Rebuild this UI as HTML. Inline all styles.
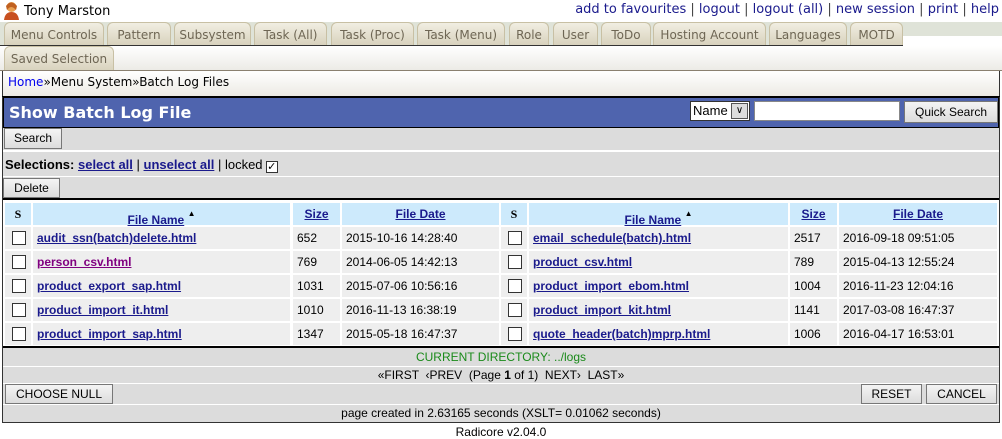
<!DOCTYPE html>
<html><head><style>
*{margin:0;padding:0;box-sizing:border-box}
body{width:1002px;height:438px;background:#fff;position:relative;font-family:"Liberation Sans",sans-serif;font-size:13px;overflow:hidden}
.a{position:absolute}
.v{font-family:"DejaVu Sans",sans-serif}
.tab{position:absolute;top:22px;height:23px;background:linear-gradient(#f1eee2,#d8d2bd);border:1px solid #c8c0a4;border-bottom:none;border-radius:6px 6px 0 0;color:#6e6654;font-family:"DejaVu Sans",sans-serif;font-size:12px;line-height:25px;text-align:center}
a{color:#1a1a8c}
.lk{color:#1a1a8c;text-decoration:underline;font-weight:bold;font-size:12px}
.btn{position:absolute;background:linear-gradient(#f4f4f4,#dcdcdc);border:1px solid #777;font-size:12px;text-align:center;color:#000}
.cell{position:absolute;background:#eeeeee;font-size:12px;line-height:22px;padding-left:4px}
.hd{position:absolute;background:#cdeafc;font-size:12px;font-weight:bold;text-align:center;line-height:22px;height:22px}
.cb{position:absolute;width:14px;height:14px;border:1px solid #333;background:#fff}
</style></head><body>
<svg class="a" style="left:3px;top:1px" width="17" height="19" viewBox="0 0 17 19"><circle cx="8.5" cy="6" r="5" fill="#e8a050"/><path d="M3 5 Q8 -2 14 5 L13 9 Q8 3 4 9Z" fill="#c06020"/><path d="M1 19 Q2 11 8.5 11 Q15 11 16 19Z" fill="#c85020"/></svg>
<div class="a v" style="left:24px;top:4px;font-size:13px">Tony Marston</div>
<div class="a v" style="right:3px;top:2px;font-size:13px;color:#444"><a>add to favourites</a> | <a>logout</a> | <a>logout (all)</a> | <a>new session</a> | <a>print</a> | <a>help</a></div>
<div class="a" style="left:0;top:22px;width:1002px;height:23px;background:#dfe3d8"></div>
<div class="a" style="left:903px;top:36px;width:99px;height:9px;background:#fff"></div>
<div class="tab" style="left:4px;width:100px">Menu Controls</div>
<div class="tab" style="left:107px;width:64px">Pattern</div>
<div class="tab" style="left:174px;width:77px">Subsystem</div>
<div class="tab" style="left:254px;width:73px">Task (All)</div>
<div class="tab" style="left:331px;width:83px">Task (Proc)</div>
<div class="tab" style="left:417px;width:88px">Task (Menu)</div>
<div class="tab" style="left:509px;width:40px">Role</div>
<div class="tab" style="left:553px;width:45px">User</div>
<div class="tab" style="left:601px;width:50px">ToDo</div>
<div class="tab" style="left:653px;width:113px">Hosting Account</div>
<div class="tab" style="left:769px;width:78px">Languages</div>
<div class="tab" style="left:850px;width:53px">MOTD</div>
<div class="a" style="left:0;top:45px;width:903px;height:1px;background:#333"></div>
<div class="a" style="left:0;top:46px;width:1002px;height:24px;background:linear-gradient(#fff,#ecebe6)"></div>
<div class="tab" style="top:46px;left:4px;width:110px;height:25px">Saved Selection</div>
<div class="a" style="left:0;top:70px;width:1002px;height:1px;background:#8a8070"></div>
<div class="a" style="left:2px;top:71px;width:998px;height:352px;border:1px solid #333;border-top:none;background:#dcdcdc"></div>
<div class="a" style="left:3px;top:71px;width:996px;height:25px;background:linear-gradient(#fff,#eceae4)"></div>
<div class="a v" style="left:8px;top:75px;font-size:12px"><span style="color:#0000ee">Home</span>»Menu System»Batch Log Files</div>
<div class="a" style="left:2px;top:96px;width:998px;height:1px;background:#000"></div>
<div class="a" style="left:3px;top:97px;width:996px;height:31px;background:#4f64ae;border:1px solid #000"></div>
<div class="a v" style="left:9px;top:103px;font-size:16px;font-weight:bold;color:#fff">Show Batch Log File</div>
<div class="a" style="left:690px;top:101px;width:60px;height:20px;background:#fff;border:1px solid #333;font-size:13px;line-height:18px;padding-left:2px">Name<span class="a" style="right:1px;top:1px;width:17px;height:16px;background:#ddd;border:1px solid #555;font-size:10px;text-align:center;line-height:14px">&#x2228;</span></div>
<div class="a" style="left:754px;top:101px;width:146px;height:20px;background:#fff;border:1px solid #888"></div>
<div class="btn" style="left:904px;top:101px;width:94px;height:22px;line-height:20px">Quick Search</div>
<div class="btn" style="left:4px;top:128px;width:58px;height:21px;line-height:19px">Search</div>
<div class="a" style="left:3px;top:150px;width:996px;height:2px;background:#fff"></div>
<div class="a" style="left:5px;top:157px;font-size:13px"><b>Selections:</b> <a class="lk" style="font-size:13px">select all</a> | <a class="lk" style="font-size:13px">unselect all</a> | locked <span style="display:inline-block;width:12px;height:12px;border:1px solid #333;background:#fff;font-size:11px;line-height:10px;vertical-align:-1px">✓</span></div>
<div class="a" style="left:3px;top:176px;width:996px;height:1px;background:#fff"></div>
<div class="btn" style="left:3px;top:178px;width:57px;height:20px;line-height:18px">Delete</div>
<div class="a" style="left:3px;top:198px;width:996px;height:150px;background:#fff;border-top:2px solid #000;border-bottom:2px solid #000"></div>
<div class="hd" style="left:5px;top:203px;width:26px;font-family:'Liberation Serif',serif">S</div>
<div class="hd" style="left:33px;top:203px;width:257px"><span class="lk" style="position:relative;top:2px">File Name</span> <span style="font-size:8px;vertical-align:6px">▲</span></div>
<div class="hd" style="left:293px;top:203px;width:47px"><span class="lk">Size</span></div>
<div class="hd" style="left:342px;top:203px;width:157px"><span class="lk">File Date</span></div>
<div class="hd" style="left:501px;top:203px;width:26px;font-family:'Liberation Serif',serif">S</div>
<div class="hd" style="left:529px;top:203px;width:259px"><span class="lk" style="position:relative;top:2px">File Name</span> <span style="font-size:8px;vertical-align:6px">▲</span></div>
<div class="hd" style="left:790px;top:203px;width:47px"><span class="lk">Size</span></div>
<div class="hd" style="left:839px;top:203px;width:158px"><span class="lk">File Date</span></div>

<div id="rows"></div>
<script>
var d=[["audit_ssn(batch)delete.html","652","2015-10-16 14:28:40","email_schedule(batch).html","2517","2016-09-18 09:51:05"],
["person_csv.html","769","2014-06-05 14:42:13","product_csv.html","789","2015-04-13 12:55:24"],
["product_export_sap.html","1031","2015-07-06 10:56:16","product_import_ebom.html","1004","2016-11-23 12:04:16"],
["product_import_it.html","1010","2016-11-13 16:38:19","product_import_kit.html","1141","2017-03-08 16:47:37"],
["product_import_sap.html","1347","2015-05-18 16:47:37","quote_header(batch)mprp.html","1006","2016-04-17 16:53:01"]];
var h="";
for(var i=0;i<5;i++){var y=227+i*24;var r=d[i];
var cols=[[5,26],[33,257],[293,47],[342,157],[501,26],[529,259],[790,47],[839,158]];
for(var j=0;j<8;j++){var c=cols[j];var t="";
if(j==0||j==4)t='<span class="cb" style="left:7px;top:4px"></span>';
else if(j==1||j==5){var col=(i==1&&j==1)?'#800080':'#1a1a8c';t='<span class="lk" style="color:'+col+'">'+r[j==1?0:3]+'</span>';}
else if(j==2)t=r[1];else if(j==3)t=r[2];else if(j==6)t=r[4];else t=r[5];
h+='<div class="cell" style="left:'+c[0]+'px;top:'+y+'px;width:'+c[1]+'px;height:22px">'+t+'</div>';}}
document.getElementById("rows").innerHTML=h;
</script>
<div class="a" style="left:3px;top:349px;width:996px;height:17px;text-align:center;color:#1a8a1a;font-size:12px;line-height:17px">CURRENT DIRECTORY: ../logs</div>
<div class="a" style="left:3px;top:366px;width:996px;height:1px;background:#fff"></div>
<div class="a" style="left:3px;top:367px;width:996px;height:16px;text-align:center;font-size:12px;line-height:16px">«FIRST &nbsp;‹PREV &nbsp;(Page <b>1</b> of 1) &nbsp;NEXT› &nbsp;LAST»</div>
<div class="a" style="left:3px;top:383px;width:996px;height:1px;background:#fff"></div>
<div class="btn" style="left:5px;top:384px;width:108px;height:20px;line-height:18px">CHOOSE NULL</div>
<div class="btn" style="left:861px;top:384px;width:61px;height:20px;line-height:18px">RESET</div>
<div class="btn" style="left:926px;top:384px;width:71px;height:20px;line-height:18px">CANCEL</div>
<div class="a" style="left:3px;top:404px;width:996px;height:1px;background:#fff"></div>
<div class="a" style="left:3px;top:405px;width:996px;height:17px;text-align:center;font-size:12px;line-height:17px">page created in 2.63165 seconds (XSLT= 0.01062 seconds)</div>
<div class="a" style="left:0;top:425px;width:1002px;text-align:center;font-size:12px">Radicore v2.04.0</div>
</body></html>
